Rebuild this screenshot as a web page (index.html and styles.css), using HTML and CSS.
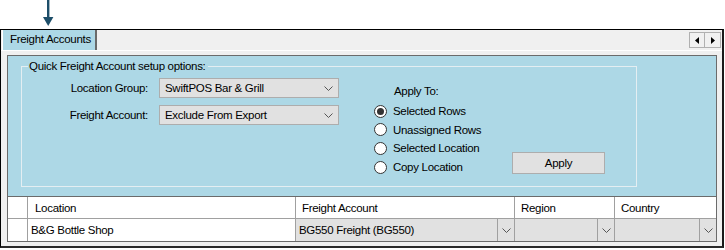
FILE: index.html
```html
<!DOCTYPE html>
<html>
<head>
<meta charset="utf-8">
<link rel="stylesheet" href="styles.css">
</head>
<body>
<div class="arrow-row">
  <svg class="arrow" width="12" height="27" viewBox="0 0 12 27"><rect x="5" y="0" width="2.4" height="19" fill="#1d4e69"/><polygon points="1,17 11.4,17 6.2,26" fill="#1d4e69"/></svg>
</div>
<div class="frame">
  <div class="tabstrip">
    <div class="tab">Freight Accounts</div>
    <div class="spacer"></div>
    <div class="scrollbtns">
      <div class="sbtn"><svg width="4" height="7" viewBox="0 0 4 7"><polygon points="4,0 4,7 0,3.5" fill="#000"/></svg></div>
      <div class="sbtn"><svg width="4" height="7" viewBox="0 0 4 7"><polygon points="0,0 0,7 4,3.5" fill="#000"/></svg></div>
    </div>
  </div>
  <div class="tabpage">
    <div class="inner">
      <div class="panel">
        <fieldset class="group">
          <legend>Quick Freight Account setup options:</legend>
          <div class="group-body">
            <div class="fields">
              <div class="field">
                <span class="lbl">Location Group:</span>
                <div class="combo"><span>SwiftPOS Bar &amp; Grill</span><svg class="chev" width="9" height="5" viewBox="0 0 9 5"><polyline points="0.5,0.5 4.5,4.5 8.5,0.5" fill="none" stroke="#555" stroke-width="1"/></svg></div>
              </div>
              <div class="field">
                <span class="lbl">Freight Account:</span>
                <div class="combo"><span>Exclude From Export</span><svg class="chev" width="9" height="5" viewBox="0 0 9 5"><polyline points="0.5,0.5 4.5,4.5 8.5,0.5" fill="none" stroke="#555" stroke-width="1"/></svg></div>
              </div>
            </div>
            <div class="apply-to">
              <div class="apply-lbl">Apply To:</div>
              <div class="radio"><span class="dot on"></span>Selected Rows</div>
              <div class="radio"><span class="dot"></span>Unassigned Rows</div>
              <div class="radio"><span class="dot"></span>Selected Location</div>
              <div class="radio"><span class="dot"></span>Copy Location</div>
            </div>
            <div class="btn-col">
              <div class="btn">Apply</div>
            </div>
          </div>
        </fieldset>
      </div>
      <div class="grid">
        <div class="row head">
          <div class="c rh"></div>
          <div class="c loc">Location</div>
          <div class="c fa">Freight Account</div>
          <div class="c rg">Region</div>
          <div class="c co">Country</div>
        </div>
        <div class="row data">
          <div class="c rh"></div>
          <div class="c loc">B&amp;G Bottle Shop</div>
          <div class="c fa cb"><span class="cbtext">BG550 Freight (BG550)</span><span class="dd"><svg width="9" height="5" viewBox="0 0 9 5"><polyline points="0.5,0.5 4.5,4.5 8.5,0.5" fill="none" stroke="#555" stroke-width="1"/></svg></span></div>
          <div class="c rg cb"><span class="cbtext"></span><span class="dd"><svg width="9" height="5" viewBox="0 0 9 5"><polyline points="0.5,0.5 4.5,4.5 8.5,0.5" fill="none" stroke="#555" stroke-width="1"/></svg></span></div>
          <div class="c co cb"><span class="cbtext"></span><span class="dd"><svg width="9" height="5" viewBox="0 0 9 5"><polyline points="0.5,0.5 4.5,4.5 8.5,0.5" fill="none" stroke="#555" stroke-width="1"/></svg></span></div>
        </div>
      </div>
    </div>
  </div>
</div>
</body>
</html>
```
FILE: styles.css
```css
* { box-sizing: border-box; }
html, body { margin: 0; padding: 0; background: #fff; }
body {
  width: 725px;
  height: 250px;
  overflow: hidden;
  font-family: "Liberation Sans", Arial, sans-serif;
  font-size: 11.5px;
  letter-spacing: -0.3px;
  color: #000;
}
.arrow-row { height: 29px; padding-left: 42px; }
.arrow { display: block; }
.frame {
  width: 724px;
  height: 219px;
  border: 1px solid #000;
  border-right: 2px solid #1a1a1a;
  border-bottom: 2px solid #2a2a2a;
  background: #f0f0f0;
  display: flex;
  flex-direction: column;
}
.tabstrip {
  height: 21px;
  display: flex;
  align-items: stretch;
  padding-left: 1px;
}
.tab {
  width: 95px;
  background: #add8e6;
  border-left: 1px solid #fff;
  border-right: 2px solid #6a6a6a;
  padding: 3px 0 0 7px;
  white-space: nowrap;
  overflow: hidden;
}
.spacer { flex: 1; }
.scrollbtns {
  display: flex;
  padding: 2px 1px 0 0;
  height: 18px;
}
.sbtn {
  width: 16px;
  height: 16px;
  border: 1px solid #b0b0b0;
  display: flex;
  align-items: center;
  justify-content: center;
  background: #f0f0f0;
}
.sbtn + .sbtn { border-left: none; }
.tabpage {
  flex: 1;
  padding: 4px 4px 4px 6px;
  border-top: 1px solid #fff;
}
.inner {
  width: 710px;
  border: 1px solid #6b6b6b;
  display: flex;
  flex-direction: column;
}
.panel {
  height: 141px;
  background: #add8e6;
  padding: 4px 0 0 13px;
  border-bottom: 1px solid #6b6b6b;
}
.group {
  margin: 0;
  width: 616px;
  height: 127px;
  border: 1px solid #e4eef2;
  padding: 0;
}
.group legend {
  padding: 0 2px 0 1px;
  margin-left: 6px;
}
.group-body {
  display: flex;
  height: 110px;
}
.fields {
  width: 352px;
  padding-top: 6px;
  display: flex;
  flex-direction: column;
  gap: 7px;
}
.field {
  display: flex;
  align-items: center;
  height: 20px;
}
.lbl {
  width: 126px;
  text-align: right;
}
.combo {
  margin-left: 11px;
  width: 180px;
  height: 20px;
  background: #e1e1e1;
  border: 1px solid #adadad;
  display: flex;
  align-items: center;
  justify-content: space-between;
  padding: 0 5px 0 5px;
}
.chev { display: block; }
.apply-to {
  width: 138px;
  padding-top: 13px;
  display: flex;
  flex-direction: column;
}
.apply-lbl {
  height: 17px;
  padding-left: 20px;
}
.radio {
  height: 18.6px;
  display: flex;
  align-items: center;
  gap: 6px;
}
.dot {
  width: 13px;
  height: 13px;
  border-radius: 50%;
  border: 1px solid #333;
  background: #fff;
  display: flex;
  align-items: center;
  justify-content: center;
}
.dot.on::after {
  content: "";
  width: 7px;
  height: 7px;
  border-radius: 50%;
  background: #333;
}
.btn-col {
  display: flex;
  align-items: flex-end;
  padding-bottom: 8px;
}
.btn {
  width: 93px;
  height: 22px;
  background: #e1e1e1;
  border: 1px solid #adadad;
  display: flex;
  align-items: center;
  justify-content: center;
}
.grid { display: flex; flex-direction: column; }
.row { display: flex; height: 22px; }
.row.head { background: #fff; border-bottom: 1px solid #a0a0a0; }
.row.data { height: 22px; }
.c {
  height: 100%;
  border-right: 1px solid #a0a0a0;
  display: flex;
  align-items: center;
  padding-left: 6px;
}
.head .c { padding-left: 6px; padding-top: 1px; }
.rh { width: 20px; background: #fff; padding: 0; }
.loc { width: 268px; background: #fff; padding-left: 3px; }
.head .loc { padding-left: 7px; }
.fa { width: 219px; }
.rg { width: 100px; }
.co { width: 101px; border-right: none; }
.cb {
  background: #e1e1e1;
  padding-left: 3px;
  justify-content: space-between;
}
.head .fa { padding-left: 6px; }
.cbtext { flex: 1; }
.dd {
  width: 17px;
  height: 100%;
  border-left: 1px solid #a0a0a0;
  display: flex;
  align-items: center;
  justify-content: center;
}
```
